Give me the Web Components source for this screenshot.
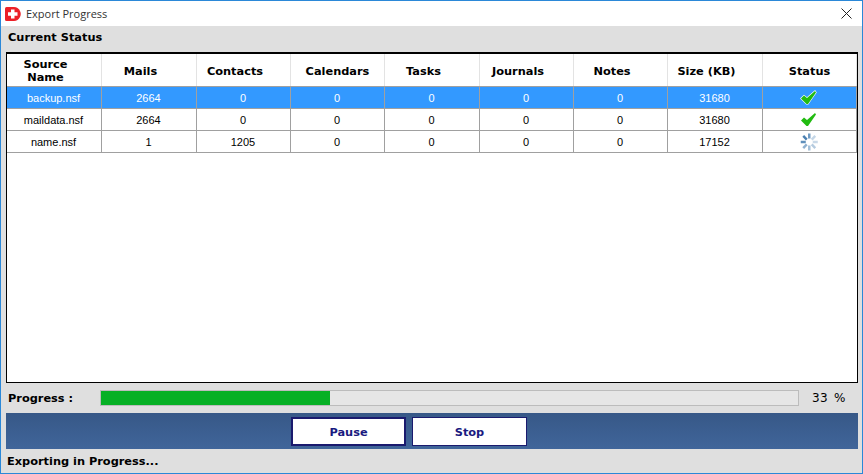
<!DOCTYPE html>
<html>
<head>
<meta charset="utf-8">
<title>Export Progress</title>
<style>
    html, body { margin: 0; padding: 0; width: 863px; height: 474px; overflow: hidden; background: #dfdfdf; }
</style>
</head>
<body>
<export-window>
    <span slot="title">Export Progress</span>
    <span slot="heading">Current Status</span>
    <status-table>
        <status-row header>
            <span class="shift">Source<br>Name</span><span class="shift">Mails</span><span class="shift">Contacts</span><span>Calendars</span><span class="shift">Tasks</span><span class="shift">Journals</span><span class="shift">Notes</span><span class="shift">Size (KB)</span><span>Status</span>
        </status-row>
        <status-row selected>
            <span>backup.nsf</span><span>2664</span><span>0</span><span>0</span><span>0</span><span>0</span><span>0</span><span>31680</span><span><done-icon halo></done-icon></span>
        </status-row>
        <status-row>
            <span>maildata.nsf</span><span>2664</span><span>0</span><span>0</span><span>0</span><span>0</span><span>0</span><span>31680</span><span><done-icon></done-icon></span>
        </status-row>
        <status-row>
            <span>name.nsf</span><span>1</span><span>1205</span><span>0</span><span>0</span><span>0</span><span>0</span><span>17152</span><span><busy-icon></busy-icon></span>
        </status-row>
    </status-table>
    <progress-line value="33"></progress-line>
    <action-bar>
        <action-button focused>Pause</action-button>
        <action-button>Stop</action-button>
    </action-bar>
    <span slot="footer">Exporting in Progress...</span>
</export-window>

<script>
// ---- window frame ----
const windowTemplate = document.createElement('template');
windowTemplate.innerHTML = /* html */`
    <style>
        :host {
            display: flex;
            flex-direction: column;
            box-sizing: border-box;
            width: 863px;
            height: 474px;
            border: 1px solid #2b88d8;
            background: #dfdfdf;
            font-family: "DejaVu Sans", sans-serif;
            font-size: 11.35px;
            color: #000;
        }
        #titlebar {
            display: flex;
            align-items: center;
            height: 25px;
            flex: none;
            background: #fff;
            font-family: "Open Sans", sans-serif;
            font-size: 11px;
            color: #333;
            padding-left: 4px;
            gap: 5px;
        }
        #titlebar svg { display: block; flex: none; }
        #titlebar #close { margin-left: auto; margin-right: 10px; }
        #heading {
            height: 26px;
            flex: none;
            padding: 4px 0 0 7px;
            box-sizing: border-box;
            font-weight: bold;
            line-height: 15px;
        }
        #content {
            display: flex;
            flex-direction: column;
            flex: 1;
            padding: 0 4px 0 5px;
        }
        #footer {
            height: 23px;
            padding: 4px 0 0 6px;
            box-sizing: border-box;
            font-weight: bold;
            line-height: 15px;
        }
    </style>
    <div id="titlebar">
        <svg width="16" height="16" viewBox="0 0 16 16">
            <path d="M0 2.5Q0 1 1.5 1H9Q13 1 15 5Q16.5 8 15 11Q13 15 9 15H1.5Q0 15 0 13.500Z" fill="#ec2027"/>
            <path d="M6 3.500H9.500V6.300H12.500V9.800H9.500V12.500H6V9.800H3V6.300H6Z" fill="#fff"/>
        </svg>
        <slot name="title"></slot>
        <svg id="close" width="11" height="11" viewBox="0 0 11 11">
            <path d="M.5 .5L10.500 10.500M10.500 .5L.5 10.500" stroke="#222" stroke-width="1" fill="none"/>
        </svg>
    </div>
    <div id="heading"><slot name="heading"></slot></div>
    <div id="content"><slot></slot></div>
    <div id="footer"><slot name="footer"></slot></div>
`;

class ExportWindow extends HTMLElement {
    constructor() {
        super();
        this.attachShadow({ mode: "open" });
        this.shadowRoot.appendChild(windowTemplate.content.cloneNode(true));
    }
}
customElements.define("export-window", ExportWindow);

// ---- table ----
const tableTemplate = document.createElement('template');
tableTemplate.innerHTML = /* html */`
    <style>
        :host {
            display: block;
            box-sizing: border-box;
            height: 331px;
            flex: none;
            border: 1px solid #000;
            border-top-width: 2px;
            background: #fff;
        }
    </style>
    <slot></slot>
`;

class StatusTable extends HTMLElement {
    constructor() {
        super();
        this.attachShadow({ mode: "open" });
        this.shadowRoot.appendChild(tableTemplate.content.cloneNode(true));
    }
}
customElements.define("status-table", StatusTable);

const rowTemplate = document.createElement('template');
rowTemplate.innerHTML = /* html */`
    <style>
        :host {
            display: block;
            width: 850px;
            box-sizing: border-box;
            background: #fff;
            color: #000;
            font-family: "Liberation Sans", sans-serif;
            font-size: 11px;
            height: 22px;
            border-bottom: 1px solid #a0a0a0;
        }
        :host([selected]) { background: #3399ff; color: #fff; }
        :host([header]) {
            height: 33px;
            font-family: "DejaVu Sans", sans-serif;
            font-size: 11.35px;
            font-weight: bold;
            line-height: 13px;
        }
        #cells {
            display: grid;
            grid-template-columns: 95px 95px 94px 94px 95px 94px 94px 95px 94px;
            height: 100%;
        }
        ::slotted(span) {
            display: flex;
            align-items: center;
            justify-content: center;
            text-align: center;
            box-sizing: border-box;
            border-right: 1px solid #a0a0a0;
            padding-right: 1px;
        }
        :host([header]) ::slotted(span) { border-right-color: #e3e3e3; padding-right: 0; padding-top: 2px; }
        :host([header]) ::slotted(span.shift) { padding-right: 17px; }
    </style>
    <div id="cells"><slot></slot></div>
`;

class StatusRow extends HTMLElement {
    constructor() {
        super();
        this.attachShadow({ mode: "open" });
        this.shadowRoot.appendChild(rowTemplate.content.cloneNode(true));
    }
}
customElements.define("status-row", StatusRow);

// ---- status icons ----
class DoneIcon extends HTMLElement {
    constructor() {
        super();
        this.attachShadow({ mode: "open" });
        const tick = "M1 8.500L4 5.500L7 8L15 1L16 2.500L8 14H6.500Z";
        const halo = this.hasAttribute("halo")
            ? `<path d="${tick}" fill="none" stroke="#fff" stroke-width="1.200"/>`
            : '';
        this.shadowRoot.innerHTML = /* html */`
            <style>
                :host { display: block; width: 17px; height: 15px; margin-right: 1px; }
                svg { display: block; }
            </style>
            <svg width="17" height="15" viewBox="0 0 17 15">
                ${halo}
                <path d="${tick}" fill="#22bb11"/>
            </svg>
        `;
    }
}
customElements.define("done-icon", DoneIcon);

class BusyIcon extends HTMLElement {
    constructor() {
        super();
        this.attachShadow({ mode: "open" });
        const spokes = [
            ["#6f9ac2", 0], ["#c4d6e6", 45], ["#c9d9e8", 90], ["#b5cbdf", 135],
            ["#a3bfd8", 180], ["#8fb0cf", 225], ["#5f8fbb", 270], ["#4a7fb1", 315]
        ].map(([colour, angle]) =>
            `<rect x="8" y=".5" width="2.500" height="5" fill="${colour}" transform="rotate(${angle} 9.250 9)"/>`
        ).join("");
        this.shadowRoot.innerHTML = /* html */`
            <style>
                :host { display: block; width: 18px; height: 18px; margin-right: 1px; }
                svg { display: block; }
            </style>
            <svg width="18" height="18" viewBox="0 0 18 18">${spokes}</svg>
        `;
    }
}
customElements.define("busy-icon", BusyIcon);

// ---- progress row ----
class ProgressLine extends HTMLElement {
    constructor() {
        super();
        this.attachShadow({ mode: "open" });
        const value = this.getAttribute("value");
        this.shadowRoot.innerHTML = /* html */`
            <style>
                :host {
                    display: flex;
                    align-items: center;
                    height: 30px;
                    flex: none;
                    font-family: "DejaVu Sans", sans-serif;
                    font-size: 11.35px;
                }
                #label { width: 94px; padding-left: 2px; box-sizing: border-box; font-weight: bold; }
                #track {
                    box-sizing: border-box;
                    width: 699px;
                    height: 16px;
                    border: 1px solid #bcbcbc;
                    background: #e6e6e6;
                }
                #fill { width: 229px; height: 100%; background: #06b025; }
                #value { margin-left: 13px; font-size: 12px; letter-spacing: .3px; word-spacing: 2px; }
            </style>
            <div id="label">Progress :</div>
            <div id="track"><div id="fill"></div></div>
            <div id="value">${value} %</div>
        `;
    }
}
customElements.define("progress-line", ProgressLine);

// ---- action bar ----
const barTemplate = document.createElement('template');
barTemplate.innerHTML = /* html */`
    <style>
        :host {
            display: flex;
            justify-content: flex-start;
            gap: 6px;
            box-sizing: border-box;
            height: 36px;
            flex: none;
            padding: 4px 0 0 285px;
            background: linear-gradient(#375887, #40659a);
        }
    </style>
    <slot></slot>
`;

class ActionBar extends HTMLElement {
    constructor() {
        super();
        this.attachShadow({ mode: "open" });
        this.shadowRoot.appendChild(barTemplate.content.cloneNode(true));
    }
}
customElements.define("action-bar", ActionBar);

const buttonTemplate = document.createElement('template');
buttonTemplate.innerHTML = /* html */`
    <style>
        :host {
            display: flex;
            align-items: center;
            justify-content: center;
            box-sizing: border-box;
            width: 115px;
            height: 29px;
            background: #fff;
            border: 1px solid #1a1a6e;
            color: #1a1a80;
            font-family: "DejaVu Sans", sans-serif;
            font-size: 11.35px;
            font-weight: bold;
        }
        :host([focused]) { border-width: 2px; }
    </style>
    <slot></slot>
`;

class ActionButton extends HTMLElement {
    constructor() {
        super();
        this.attachShadow({ mode: "open" });
        this.shadowRoot.appendChild(buttonTemplate.content.cloneNode(true));
    }
}
customElements.define("action-button", ActionButton);
</script>
</body>
</html>
